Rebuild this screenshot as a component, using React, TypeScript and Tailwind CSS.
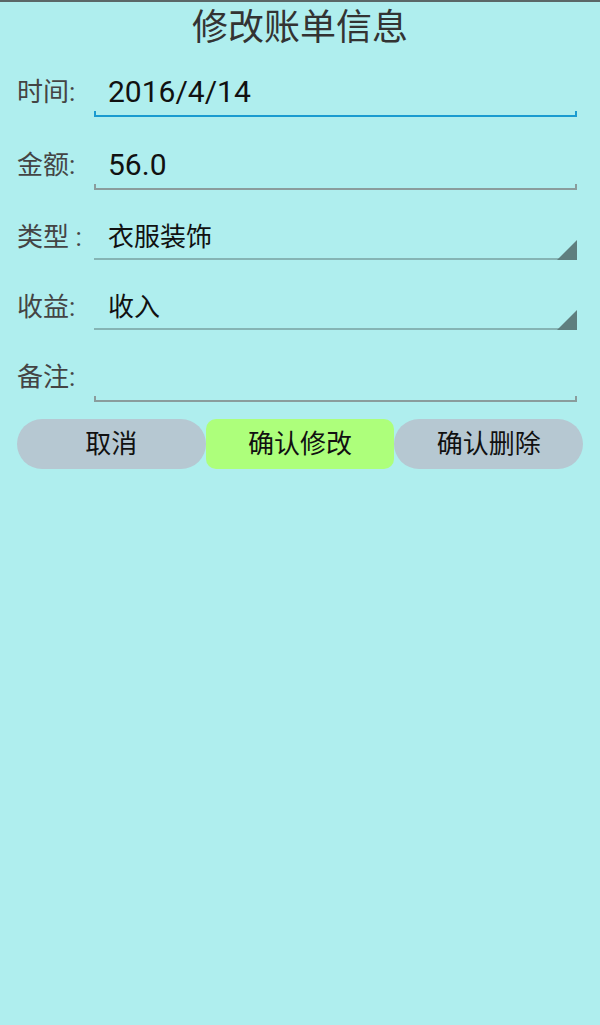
const font = { fontFamily: 'Roboto, "Noto Sans CJK SC", sans-serif' };

type EditRowProps = { label: string; value?: string; focused?: boolean; className?: string };

const EditRow = ({ label, value, focused, className }: EditRowProps) => (
  <div className={`flex items-start pl-[17px] pr-[23px] ${className ?? ""}`}>
    <div className="w-[77px] shrink-0 whitespace-nowrap text-[26px] leading-[34px] text-[#444]">{label}</div>
    <div className="flex-1">
      <div className="h-[34px] pl-[14px] text-[30px] leading-[34px] text-[#111]">{value}</div>
      <div
        className={`mt-[2px] h-[6px] border-x-2 border-b-2 ${
          focused ? "border-[#1a9bd0]" : "border-[#8a9c9c]"
        }`}
      />
    </div>
  </div>
);

type SpinnerRowProps = { label: string; value: string; className?: string };

const SpinnerRow = ({ label, value, className }: SpinnerRowProps) => (
  <div className={`flex items-start pl-[17px] pr-[23px] ${className ?? ""}`}>
    <div className="w-[77px] shrink-0 whitespace-nowrap text-[26px] leading-[34px] text-[#444]">{label}</div>
    <div className="relative h-[40px] flex-1 border-b-2 border-[#85b4b4]">
      <div className="pl-[14px] text-[26px] leading-[34px] text-[#111]">{value}</div>
      <svg className="absolute right-0 bottom-[-2px]" width="20" height="20" viewBox="0 0 20 20">
        <polygon points="20,0 20,20 0,20" fill="#5f7e7e" />
      </svg>
    </div>
  </div>
);

export default function App() {
  return (
    <div className="min-h-[1025px] w-full border-t-2 border-[#5b6767] bg-[#afeeee]" style={font}>
      <h1 className="pt-[4px] text-center text-[36px] leading-[44px] font-normal text-[#333]">修改账单信息</h1>

      <EditRow label="时间:" value="2016/4/14" focused className="mt-[25px]" />
      <EditRow label="金额:" value="56.0" className="mt-[31px]" />
      <SpinnerRow label="类型 :" value="衣服装饰" className="mt-[30px]" />
      <SpinnerRow label="收益:" value="收入" className="mt-[30px]" />
      <EditRow label="备注:" className="mt-[30px]" />

      <div className="mt-[17px] flex px-[17px]">
        <button className="h-[50px] flex-1 rounded-full bg-[#b6c8d2] text-[26px] text-[#111]">取消</button>
        <button className="h-[50px] flex-1 rounded-[10px] bg-[#adff7b] text-[26px] text-[#111]">确认修改</button>
        <button className="h-[50px] flex-1 rounded-full bg-[#b6c8d2] text-[26px] text-[#111]">确认删除</button>
      </div>
    </div>
  );
}
